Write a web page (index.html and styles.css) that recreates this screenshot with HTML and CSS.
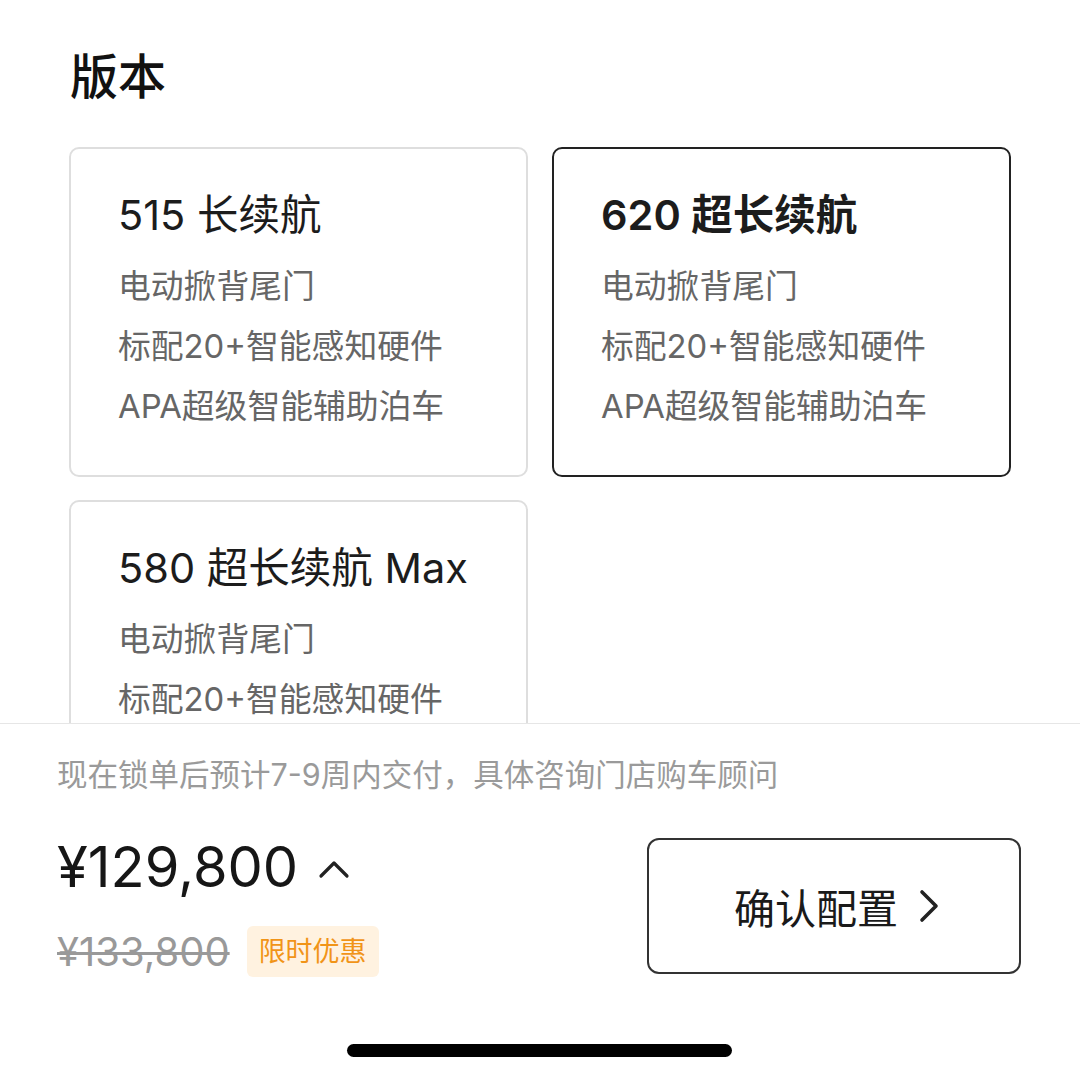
FILE: index.html
```html
<!DOCTYPE html>
<html lang="zh-CN">
<head>
<meta charset="utf-8">
<link rel="stylesheet" href="styles.css">
</head>
<body>
<div class="page">
  <section class="scroll">
    <h1 class="title">版本</h1>
    <div class="grid">
      <div class="card">
        <div class="card-title">515 长续航</div>
        <div class="feat">电动掀背尾门</div>
        <div class="feat">标配20+智能感知硬件</div>
        <div class="feat">APA超级智能辅助泊车</div>
      </div>
      <div class="card selected">
        <div class="card-title">620 超长续航</div>
        <div class="feat">电动掀背尾门</div>
        <div class="feat">标配20+智能感知硬件</div>
        <div class="feat">APA超级智能辅助泊车</div>
      </div>
      <div class="card">
        <div class="card-title">580 超长续航 Max</div>
        <div class="feat">电动掀背尾门</div>
        <div class="feat">标配20+智能感知硬件</div>
        <div class="feat">APA超级智能辅助泊车</div>
      </div>
    </div>
  </section>
  <footer class="footer">
    <div class="notice">现在锁单后预计7-9周内交付，具体咨询门店购车顾问</div>
    <div class="row">
      <div class="prices">
        <div class="price">¥129,800
          <svg class="caret" width="32" height="20" viewBox="0 0 32 20"><path d="M3 17 L16 4 L29 17" fill="none" stroke="#222" stroke-width="3.2" stroke-linecap="round" stroke-linejoin="round"/></svg>
        </div>
        <div class="old-row">
          <span class="old">¥133,800</span>
          <span class="badge">限时优惠</span>
        </div>
      </div>
      <button class="confirm">确认配置
        <svg class="chev" width="22" height="34" viewBox="0 0 22 34"><path d="M4 3 L18 17 L4 31" fill="none" stroke="#222" stroke-width="3.6" stroke-linecap="round" stroke-linejoin="round"/></svg>
      </button>
    </div>
    <div class="home"></div>
  </footer>
</div>
</body>
</html>
```
FILE: styles.css
```css
* { box-sizing: border-box; }
html, body { margin: 0; padding: 0; background: #fff; }
body {
  font-family: Inter, "Noto Sans CJK SC", sans-serif;
  color: #222;
}
.page { width: 1080px; height: 1080px; overflow: hidden; display: flex; flex-direction: column; }
.scroll { height: 723px; overflow: hidden; padding: 47px 69px 0 69px; flex: none; }
.title { margin: 0 0 40px 1px; font-size: 48px; line-height: 60px; font-weight: 500; color: #111; }
.grid { display: grid; grid-template-columns: 459px 459px; column-gap: 24px; row-gap: 23px; }
.card {
  border: 2px solid #dedede;
  border-radius: 10px;
  padding: 38px 20px 39px 47px;
  height: 330px;
}
.card.selected { border-color: #222; }
.card-title { font-size: 41.5px; line-height: 56px; margin-bottom: 13px; color: #1c1c1c; white-space: nowrap; }
.selected .card-title { font-weight: 600; }
.feat { font-size: 32.8px; line-height: 60px; color: #666; white-space: nowrap; }
.footer { border-top: 1px solid #e6e6e6; padding: 31px 59px 0 57px; flex: 1; display: flex; flex-direction: column; }
.notice { font-size: 30.5px; line-height: 40px; color: #9a9a9a; white-space: nowrap; }
.row { margin-top: 40px; display: flex; justify-content: space-between; align-items: center; }
.prices { display: flex; flex-direction: column; }
.price { font-size: 56px; line-height: 64px; color: #161616; display: flex; align-items: center; white-space: nowrap; }
.caret { margin-left: 20px; margin-top: 4px; }
.old-row { margin-top: 27px; display: flex; align-items: center; }
.old { font-size: 40px; line-height: 51px; color: #999; text-decoration: line-through; text-decoration-thickness: 3px; }
.badge { margin-left: 17px; background: #fff2e0; color: #f19418; font-size: 27px; line-height: 51px; padding: 0 12px; border-radius: 6px; }
.confirm {
  width: 374px; height: 136px;
  border: 2px solid #333; border-radius: 12px; background: #fff;
  font-family: inherit; font-size: 41px; color: #1a1a1a;
  display: flex; align-items: center; justify-content: center;
  padding: 0 0 0 6px;
}
.chev { margin-left: 20px; }
.home { margin: 67px auto 0; width: 385px; height: 13px; border-radius: 7px; background: #000; }
```
